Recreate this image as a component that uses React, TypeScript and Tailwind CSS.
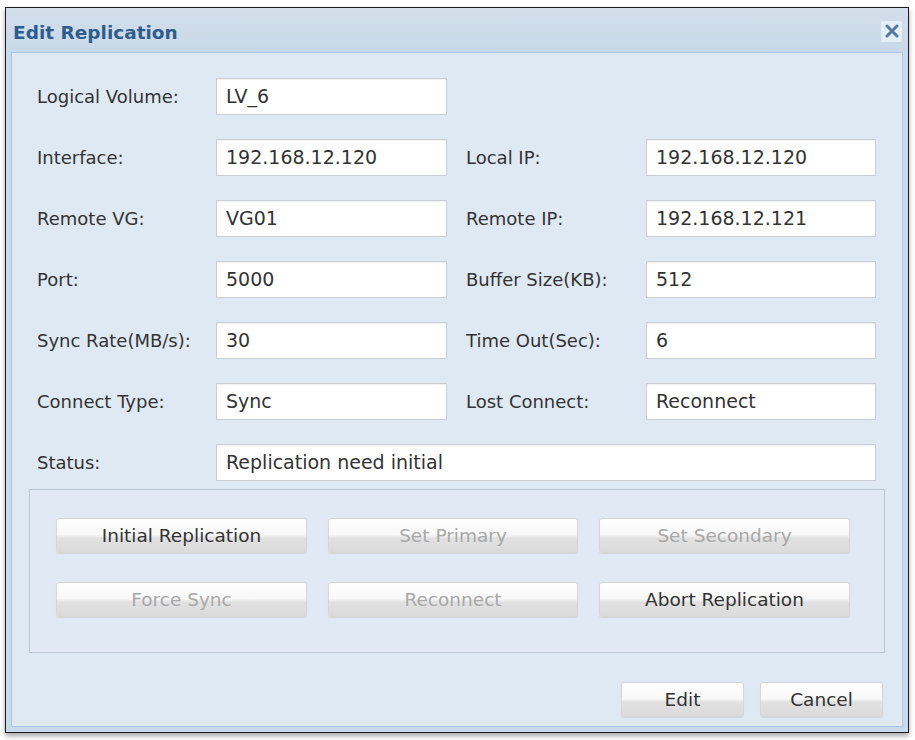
import React from "react";

type Field = { label: string; value: string };

const rows: [Field, Field | null][] = [
	[{ label: "Logical Volume:", value: "LV_6" }, null],
	[{ label: "Interface:", value: "192.168.12.120" }, { label: "Local IP:", value: "192.168.12.120" }],
	[{ label: "Remote VG:", value: "VG01" }, { label: "Remote IP:", value: "192.168.12.121" }],
	[{ label: "Port:", value: "5000" }, { label: "Buffer Size(KB):", value: "512" }],
	[{ label: "Sync Rate(MB/s):", value: "30" }, { label: "Time Out(Sec):", value: "6" }],
	[{ label: "Connect Type:", value: "Sync" }, { label: "Lost Connect:", value: "Reconnect" }],
];

const actions = [
	{ text: "Initial Replication", enabled: true },
	{ text: "Set Primary", enabled: false },
	{ text: "Set Secondary", enabled: false },
	{ text: "Force Sync", enabled: false },
	{ text: "Reconnect", enabled: false },
	{ text: "Abort Replication", enabled: true },
];

const inputCls =
	"h-[37px] bg-white border border-[#c9ced4] shadow-[inset_0_1px_1px_rgba(0,0,0,0.06)] flex items-center pl-[9px] text-[19px] text-[#333]";

const btnCls =
	"h-[35px] rounded-[3px] border border-[#d6d6d6] flex items-center justify-center text-[18.5px] bg-[linear-gradient(to_bottom,#ffffff_0%,#f8f8f8_48%,#e1e1e1_58%,#dbdbdb_100%)] shadow-[0_1px_1px_rgba(0,0,0,0.08)]";

const CloseIcon = () => (
	<svg width="14" height="14" viewBox="0 0 14 14">
		<path d="M2 2 L12 12 M12 2 L2 12" stroke="#55799c" strokeWidth="3" strokeLinecap="round" />
	</svg>
);

export default function App() {
	return (
		<div className="w-[915px] h-[740px] bg-white pt-[7px] pl-[5px] font-['DejaVu_Sans',sans-serif]">
			{/* window frame */}
			<div className="w-[904px] h-[726px] border border-[#1c1c1c] bg-[#c9dbeb] flex flex-col shadow-[0_3px_5px_rgba(0,0,0,0.35)]">
				{/* title bar */}
				<div className="h-[44px] shrink-0 flex items-center justify-between pl-[7px] pr-[6px] bg-[linear-gradient(to_bottom,#d3dfea,#c8d8e8)]">
					<span className="text-[18.5px] font-bold text-[#2d5d8c] leading-none pt-[6px]">Edit Replication</span>
					<button className="w-[21px] h-[21px] mt-[2px] bg-[#e4eef8] rounded-[2px] flex items-center justify-center">
						<CloseIcon />
					</button>
				</div>
				{/* body */}
				<div className="flex-1 ml-[5px] mr-[5px] mb-[5px] border border-[#a6c8e6] bg-[#dfe9f4] flex flex-col pt-[25px] pl-[17px] pr-[19px]">
					<div className="flex flex-col gap-[24px] pl-[8px]">
						{rows.map(([left, right], i) => (
							<div key={i} className="flex items-center text-[18px] text-[#333]">
								<span className="w-[179px]">{left.label}</span>
								<div className={`${inputCls} w-[231px]`}>{left.value}</div>
								{right && (
									<>
										<span className="w-[180px] ml-[19px]">{right.label}</span>
										<div className={`${inputCls} w-[230px] pl-[7px]`}>{right.value}</div>
									</>
								)}
							</div>
						))}
						<div className="flex items-center text-[18px] text-[#333]">
							<span className="w-[179px]">Status:</span>
							<div className={`${inputCls} w-[660px]`}>Replication need initial</div>
						</div>
					</div>

					{/* action buttons */}
					<div className="mt-[8px] w-[856px] h-[164px] border border-[#b9c7d5] bg-[#e1eaf4] pt-[28px] pl-[26px]">
						<div className="grid grid-cols-[251px_250px_251px] gap-x-[21px] gap-y-[29px]">
							{actions.map((a) => (
								<button
									key={a.text}
									className={`${btnCls} ${a.enabled ? "text-[#333]" : "text-[#a8a8a8]"}`}
								>
									{a.text}
								</button>
							))}
						</div>
					</div>

					{/* dialog footer */}
					<div className="mt-[29px] flex justify-end gap-[16px]">
						<button className={`${btnCls} w-[123px] h-[34px] text-[#333]`}>Edit</button>
						<button className={`${btnCls} w-[123px] h-[34px] text-[#333]`}>Cancel</button>
					</div>
				</div>
			</div>
		</div>
	);
}
